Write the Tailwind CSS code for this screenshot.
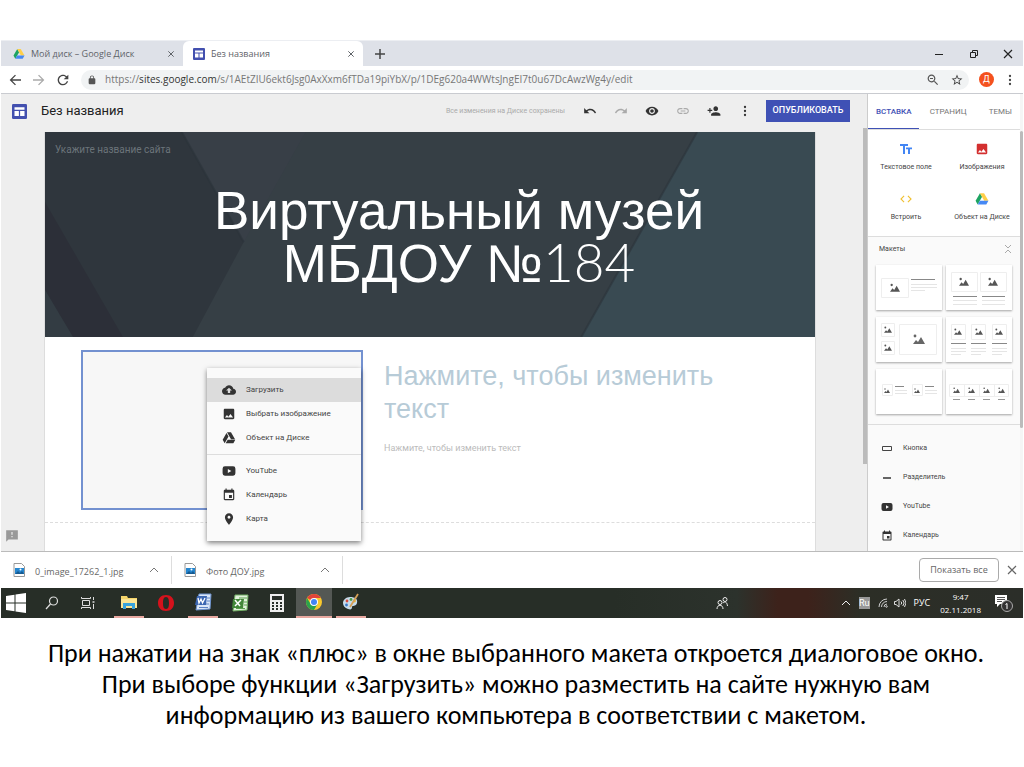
<!DOCTYPE html>
<html lang="ru">
<head>
<meta charset="utf-8">
<meta name="viewport" content="width=device-width, initial-scale=1">
<title>Без названия</title>
<script src="https://cdn.jsdelivr.net/npm/@tailwindcss/browser@4"></script>
</head>
<body class="bg-white fill-[#333] font-['Roboto','Liberation_Sans',sans-serif] text-[#444]">
<svg class="hidden" aria-hidden="true">
  <symbol id="image" viewBox="0 0 24 24"><path d="M21 19V5c0-1.1-.9-2-2-2H5c-1.1 0-2 .9-2 2v14c0 1.1.9 2 2 2h14c1.1 0 2-.9 2-2zM8.500 13.500l2.500 3.010L14.500 12l4.500 6H5l3.500-4.500z"/></symbol>
  <symbol id="dots" viewBox="0 0 24 24"><circle cx="12" cy="4" r="2.300"/><circle cx="12" cy="12" r="2.300"/><circle cx="12" cy="20" r="2.300"/></symbol>
  <symbol id="event" viewBox="0 0 24 24"><path d="M17 12h-5v5h5v-5zM16 1v2H8V1H6v2H5c-1.110 0-1.990.9-1.990 2L3 19c0 1.100.89 2 2 2h14c1.100 0 2-.9 2-2V5c0-1.100-.9-2-2-2h-1V1h-2zm3 18H5V8h14v11z"/></symbol>
  <symbol id="youtube" viewBox="0 0 24 24"><path fill-rule="evenodd" d="M5 4h14a4 4 0 0 1 4 4v8a4 4 0 0 1-4 4H5a4 4 0 0 1-4-4V8a4 4 0 0 1 4-4zm5 4.500v7l6-3.500z"/></symbol>
  <symbol id="cross" viewBox="0 0 24 24"><path d="M4 4l16 16M20 4L4 20" fill="none" stroke="currentColor" stroke-width="3"/></symbol>
  <symbol id="drive" viewBox="0 0 24 24"><path fill="#1da462" d="M8.500 2L1 15l3.600 6.500L12.200 8.300z"/><path fill="#ffcf48" d="M8.500 2h7l7.500 13h-7.200z"/><path fill="#4688f4" d="M8.400 15H23l-3.600 6.500H4.600z"/></symbol>
  <symbol id="sites" viewBox="0 0 24 24"><path fill="#4350af" d="M2 0h20a2 2 0 0 1 2 2v20a2 2 0 0 1-2 2H2a2 2 0 0 1-2-2V2a2 2 0 0 1 2-2z"/><path fill="#fff" d="M4 5h16v4H4zM4 11h7v8H4zM13 11h7v8h-7z"/></symbol>
  <symbol id="peak" viewBox="0 0 12 10"><path d="M0 10l3-4 2 2 3-5 4 7z"/><circle cx="2" cy="2" r="1.400"/></symbol>
  <symbol id="jpg" viewBox="0 0 12 14"><path d="M1 .5h7.500l3 3v10H1z" fill="#fff" stroke="#999"/><path d="M2 5h9v6H2z" fill="#2586cf"/><path d="M2 11l3-3 2 2 2-2 2 3z" fill="#165a91"/><circle cx="7.500" cy="6.500" r="1" fill="#fff"/></symbol>
</svg>

<main class="mx-px mt-10 border-t border-[#eceef2]">
  <!-- Browser tabs -->
  <div class="flex h-[25px] items-stretch bg-[#dee1e8] text-[10px] text-[#5f6368]">
    <div class="flex w-[182px] items-center gap-1.5 pl-3 pr-1">
      <svg class="size-3 shrink-0"><use href="#drive"/></svg>
      <span class="flex-1 font-['Open_Sans',sans-serif] text-[9px]">Мой диск – Google Диск</span>
      <button aria-label="Закрыть вкладку" class="p-1"><svg class="size-2"><use href="#cross"/></svg></button>
    </div>
    <div class="flex w-[180px] items-center gap-1.5 rounded-t-md bg-white pl-2.5 pr-1">
      <svg class="size-3 shrink-0"><use href="#sites"/></svg>
      <span class="flex-1 font-['Open_Sans',sans-serif] text-[9px]">Без названия</span>
      <button aria-label="Закрыть вкладку" class="p-1"><svg class="size-2"><use href="#cross"/></svg></button>
    </div>
    <button aria-label="Новая вкладка" class="ml-3"><svg class="size-2.5" viewBox="0 0 10 10"><path d="M5 0v10M0 5h10" stroke="#444" stroke-width="1.500"/></svg></button>
    <div class="ml-auto mr-2.5 flex items-center gap-6 text-[#222]">
      <button aria-label="Свернуть" class="mr-px"><svg class="size-2.5" viewBox="0 0 10 10"><path d="M1 5.500h8" stroke="#222"/></svg></button>
      <button aria-label="Окно"><svg class="size-2.5" viewBox="0 0 10 10"><path d="M1.500 3.500h5v5h-5zM3.500 3V1.500h5v5H7" fill="none" stroke="#222"/></svg></button>
      <button aria-label="Закрыть"><svg class="size-2.5" viewBox="0 0 10 10"><path d="M1 1l8 8M9 1L1 9" stroke="#222" stroke-width="1.200"/></svg></button>
    </div>
  </div>
  <!-- Address bar -->
  <div class="flex h-[28px] items-center border-b border-[#c9cbd0] bg-white pl-1.5 text-[#555]">
    <button aria-label="Назад" class="mr-2"><svg class="size-4" viewBox="0 0 24 24"><path fill="#444" d="M21 11H7.800l5.600-5.600L12 4l-8 8 8 8 1.400-1.400L7.800 13H21z"/></svg></button>
    <button aria-label="Вперёд" class="mr-2"><svg class="size-4" viewBox="0 0 24 24"><path fill="#aaa" d="M3 11h13.200l-5.600-5.600L12 4l8 8-8 8-1.400-1.400 5.600-5.600H3z"/></svg></button>
    <button aria-label="Обновить" class="mr-2.5"><svg class="size-4" viewBox="0 0 24 24"><path fill="#444" d="M17.650 6.350C16.200 4.900 14.210 4 12 4c-4.420 0-7.990 3.580-7.990 8s3.570 8 7.990 8c3.730 0 6.840-2.550 7.730-6h-2.080c-.82 2.330-3.040 4-5.650 4-3.310 0-6-2.690-6-6s2.690-6 6-6c1.660 0 3.140.69 4.220 1.780L13 11h7V4l-2.350 2.350z"/></svg></button>
    <div class="flex h-5 flex-1 items-center rounded-full bg-[#f1f3f4] pl-1.5 pr-1.5">
      <svg class="mr-2 size-2.5 shrink-0" viewBox="0 0 24 24"><path fill="#555" d="M18 8h-1V6c0-2.760-2.240-5-5-5S7 3.240 7 6v2H6c-1.100 0-2 .9-2 2v10c0 1.100.9 2 2 2h12c1.100 0 2-.9 2-2V10c0-1.100-.9-2-2-2zm-2.900 0H8.900V6c0-1.710 1.390-3.100 3.100-3.100s3.100 1.390 3.100 3.100v2z"/></svg>
      <a href="#" class="flex-1 whitespace-nowrap font-['Open_Sans',sans-serif] text-[10px] text-[#777]">https://<span class="text-[#333]">sites.google.com</span>/s/1AEtZIU6ekt6Jsg0AxXxm6fTDa19piYbX/p/1DEg620a4WWtsJngEI7t0u67DcAwzWg4y/edit</a>
      <button aria-label="Масштаб" class="mr-3"><svg class="size-3" viewBox="2 2 20 20"><path fill="#555" d="M15.500 14h-.79l-.28-.27C15.410 12.590 16 11.110 16 9.500 16 5.910 13.090 3 9.500 3S3 5.910 3 9.500 5.910 16 9.500 16c1.610 0 3.090-.59 4.230-1.570l.27.28v.79l5 4.990L20.490 19l-4.990-5zm-6 0C7.010 14 5 11.990 5 9.500S7.010 5 9.500 5 14 7.010 14 9.500 11.990 14 9.500 14zM7 8.500h5v2H7z"/></svg></button>
      <button aria-label="Закладка"><svg class="size-3" viewBox="1 1 22 22"><path fill="#444" d="M22 9.240l-7.190-.62L12 2 9.190 8.630 2 9.240l5.460 4.730L5.820 21 12 17.270 18.180 21l-1.630-7.030L22 9.240zM12 15.400l-3.760 2.270 1-4.280-3.320-2.880 4.380-.38L12 6.100l1.710 4.040 4.380.38-3.320 2.880 1 4.280L12 15.400z"/></svg></button>
    </div>
    <button class="ml-2.5 mr-2.5 flex size-[15px] items-center justify-center rounded-full bg-[#f4511e] text-[9px] text-white">Д</button>
    <button aria-label="Меню" class="mr-[7px]"><svg class="size-3" fill="#444"><use href="#dots"/></svg></button>
  </div>

  <!-- Sites editor -->
  <div class="flex h-[457px] items-stretch bg-[#eee]">
    <div class="flex min-w-0 flex-1 flex-col">
      <header class="flex h-[38px] shrink-0 items-center pb-1 pl-[11px] pr-[17px]">
        <svg class="size-[15px] shrink-0"><use href="#sites"/></svg>
        <h1 class="ml-3.5 flex-1 text-[13px] text-[#222]">Без названия</h1>
        <span class="mr-[18px] text-[7px] text-[#aaa]">Все изменения на Диске сохранены</span>
        <div class="mr-3.5 flex items-center gap-[17px]">
          <button aria-label="Отменить"><svg class="size-3.5" viewBox="0 0 24 24"><path d="M12.500 8c-2.650 0-5.050.99-6.900 2.600L2 7v9h9l-3.620-3.620c1.390-1.160 3.160-1.880 5.120-1.880 3.540 0 6.550 2.310 7.600 5.500l2.370-.78C21.080 11.030 17.150 8 12.500 8z"/></svg></button>
          <button aria-label="Повторить"><svg class="size-3.5" viewBox="0 0 24 24"><path fill="#aaa" d="M18.400 10.600C16.550 8.990 14.150 8 11.500 8c-4.650 0-8.580 3.030-9.960 7.220L3.900 16c1.050-3.190 4.050-5.500 7.600-5.500 1.950 0 3.730.72 5.120 1.880L13 16h9V7l-3.600 3.600z"/></svg></button>
          <button aria-label="Просмотр"><svg class="size-3.5" viewBox="0 0 24 24"><path d="M12 4.500C7 4.500 2.730 7.610 1 12c1.730 4.390 6 7.500 11 7.500s9.270-3.110 11-7.500c-1.730-4.390-6-7.500-11-7.500zM12 17c-2.760 0-5-2.240-5-5s2.240-5 5-5 5 2.240 5 5-2.240 5-5 5zm0-8c-1.660 0-3 1.340-3 3s1.340 3 3 3 3-1.340 3-3-1.340-3-3-3z"/></svg></button>
          <button aria-label="Ссылка"><svg class="size-3.5" viewBox="0 0 24 24"><path fill="#aaa" d="M3.900 12c0-1.710 1.390-3.100 3.100-3.100h4V7H7c-2.760 0-5 2.240-5 5s2.240 5 5 5h4v-1.900H7c-1.710 0-3.100-1.390-3.100-3.100zM8 13h8v-2H8v2zm9-6h-4v1.900h4c1.710 0 3.100 1.390 3.100 3.100s-1.390 3.100-3.100 3.100h-4V17h4c2.760 0 5-2.240 5-5s-2.240-5-5-5z"/></svg></button>
          <button aria-label="Добавить пользователей"><svg class="size-3.5" viewBox="0 0 24 24"><path d="M15 12c2.210 0 4-1.790 4-4s-1.790-4-4-4-4 1.790-4 4 1.790 4 4 4zm-9-2V7H4v3H1v2h3v3h2v-3h3v-2H6zm9 4c-2.670 0-8 1.340-8 4v2h16v-2c0-2.660-5.330-4-8-4z"/></svg></button>
          <button aria-label="Ещё"><svg class="h-3 w-3.5"><use href="#dots"/></svg></button>
        </div>
        <button class="h-[22px] w-[84px] bg-[#3f51b5] text-[9px] font-medium text-white">ОПУБЛИКОВАТЬ</button>
      </header>
      <div class="flex min-h-0 flex-1">
        <div class="flex w-[43px] items-end pb-2 pl-1">
          <button aria-label="Отзыв"><svg class="size-3.5" viewBox="0 0 24 24"><path fill="#999" d="M20 2H2v20l4-4h16V2zm-7 12h-2v-2h2v2zm0-4h-2V5h2v5z"/></svg></button>
        </div>
        <!-- Page canvas -->
        <div class="flex min-w-0 flex-1 flex-col border-x border-[#ddd] bg-white">
          <section class="relative h-[205px] shrink-0 overflow-hidden bg-[#363e44] text-white">
            <svg class="absolute inset-0 size-full" viewBox="0 0 771 205" preserveAspectRatio="none">
              <path d="M0 0h771v205H0z" fill="#363f45"/>
              <path d="M137 0h124l-62 110z" fill="#383f47"/>
              <path d="M0 0h137l62 110-51 95H0z" fill="#2f363d"/>
              <path d="M0 70l78 135H28L0 158z" fill="#2c2f38"/>
              <path d="M0 158l28 47H0z" fill="#333c43"/>
              <path d="M653 0h118v205H537z" fill="#394a52"/>
              <path d="M653 0L537 205M137 0l62 110" stroke="#2b343a" stroke-width="2" fill="none" opacity=".6"/>
            </svg>
            <p class="relative pl-2.5 pt-[11px] text-[10px] leading-[14px] text-[#6b747a]">Укажите название сайта</p>
            <h2 class="relative mt-7 pl-[58px] text-center font-['Liberation_Sans',sans-serif] text-[53px] leading-[51px]">Виртуальный музей<br>МБДОУ №<span class="font-['Lato',sans-serif] font-light">184</span></h2>
          </section>
          <section class="flex h-[186px] shrink-0 items-start border-b border-dashed border-[#ddd] pl-9 pt-[13px]">
            <div class="relative h-[160px] w-[282px] shrink-0 border-2 border-[#7391d0] bg-[#f7f7f7]">
              <div role="menu" class="absolute left-[124px] top-4 w-[154px] bg-[#fafafa] pb-2.5 pt-2.5 text-[8px] text-[#444] shadow-[0_2px_5px_rgba(0,0,0,0.5)]">
                <button role="menuitem" class="flex h-[24px] w-full items-center gap-2.5 bg-[#dcdcdc] pl-[15px]"><svg class="size-3.5" viewBox="0 0 24 24"><path d="M19.350 10.040C18.670 6.590 15.640 4 12 4 9.110 4 6.600 5.640 5.350 8.040 2.340 8.360 0 10.910 0 14c0 3.310 2.690 6 6 6h13c2.760 0 5-2.240 5-5 0-2.640-2.050-4.780-4.650-4.960zM14 13v4h-4v-4H7l5-5 5 5h-3z"/></svg>Загрузить</button>
                <button role="menuitem" class="flex h-[24px] w-full items-center gap-2.5 pl-[15px]"><svg class="size-3.5"><use href="#image"/></svg>Выбрать изображение</button>
                <button role="menuitem" class="flex h-[24px] w-full items-center gap-2.5 pl-[15px]"><svg class="size-3.5" viewBox="0 0 24 24"><path d="M7.710 3.500L1.150 15l3.430 6 6.550-11.500L7.710 3.500zM9.730 15L6.300 21h13.120l3.430-6H9.730zM22.280 14L15.420 2H8.580l6.860 12h6.840z"/></svg>Объект на Диске</button>
                <hr class="my-1 border-[#ddd]">
                <button role="menuitem" class="flex h-[24px] w-full items-center gap-2.5 pl-[15px]"><svg class="size-3.5"><use href="#youtube"/></svg>YouTube</button>
                <button role="menuitem" class="flex h-[24px] w-full items-center gap-2.5 pl-[15px]"><svg class="size-3.5"><use href="#event"/></svg>Календарь</button>
                <button role="menuitem" class="flex h-[24px] w-full items-center gap-2.5 pl-[15px]"><svg class="size-3.5" viewBox="0 0 24 24"><path d="M12 2C8.130 2 5 5.130 5 9c0 5.250 7 13 7 13s7-7.750 7-13c0-3.870-3.130-7-7-7zm0 9.500c-1.380 0-2.500-1.120-2.500-2.500s1.120-2.500 2.500-2.500 2.500 1.120 2.500 2.500-1.120 2.500-2.500 2.500z"/></svg>Карта</button>
              </div>
            </div>
            <div class="ml-5 w-[360px] pt-2.5 pl-px">
              <h3 class="font-['Liberation_Sans',sans-serif] text-[27px] leading-[33px] text-[#b7cbd7]">Нажмите, чтобы изменить текст</h3>
              <p class="mt-3.5 text-[9px] leading-4 text-[#bbb]">Нажмите, чтобы изменить текст</p>
            </div>
          </section>
        </div>
        <div class="w-[47px]"></div>
        <div class="w-1 pb-[83px]"><div class="h-full -mt-1 bg-[#bbb]"></div></div>
      </div>
    </div>

    <!-- Insert panel -->
    <aside class="flex w-[153px] shrink-0 flex-col border-l border-[#ccc] bg-[#fafafa] text-[7px]">
      <nav class="flex h-[36px] shrink-0 items-stretch justify-between border-b border-[#ddd] bg-white pr-2 text-[8px] text-[#777]">
        <a href="#" class="flex items-center border-b border-[#3f51b5] px-2 pt-0.5 font-medium text-[#3f51b5]">ВСТАВКА</a>
        <a href="#" class="flex items-center pt-px">СТРАНИЦ</a>
        <a href="#" class="flex items-center pl-3 pt-px">ТЕМЫ</a>
      </nav>
      <div class="grid h-[107px] shrink-0 grid-cols-2 items-start border-b border-[#ddd] bg-white pt-3">
        <button class="flex h-[50px] flex-col items-center gap-1.5"><svg class="size-3.5" viewBox="0 0 14 14"><path d="M1 2h8v2H6v8H4V4H1zM7 5.500h6v1.800h-2V12H9V7.300H7z" fill="#4285f4"/></svg>Текстовое поле</button>
        <button class="flex h-[50px] flex-col items-center gap-1.5"><svg class="size-3.5 fill-[#d32f2f]"><use href="#image"/></svg>Изображения</button>
        <button class="flex h-[50px] flex-col items-center gap-1.5"><svg class="size-3.5 fill-[#f0c030]" viewBox="0 0 24 24"><path d="M9.400 16.600L4.800 12l4.600-4.600L8 6l-6 6 6 6 1.400-1.400zm5.200 0l4.600-4.600-4.600-4.600L16 6l6 6-6 6-1.400-1.400z"/></svg>Встроить</button>
        <button class="flex h-[50px] flex-col items-center gap-1.5"><svg class="size-3.5"><use href="#drive"/></svg>Объект на Диске</button>
      </div>
      <div class="flex h-[28px] shrink-0 items-center justify-between pb-1 pl-[11px] pr-2 text-[7px]">Макеты
        <button aria-label="Свернуть макеты"><svg class="h-2.5 w-2" viewBox="0 0 8 10"><path d="M1 1l3 3 3-3M1 9l3-3 3 3" fill="none" stroke="#aaa"/></svg></button>
      </div>
      <div class="grid shrink-0 grid-cols-2 gap-x-1 gap-y-[7px] border-b border-[#ddd] pb-2.5 pl-2 pr-2">
        <button aria-label="Макет 1" class="bg-white shadow-[0_1px_2px_rgba(0,0,0,0.35)]"><svg class="h-[45px] w-full" viewBox="0 0 66 45"><path d="M5.500 13.500h27v19h-27z" fill="none" stroke="#eee"/><use href="#peak" x="14" y="18" width="10" height="9" fill="#555"/><path d="M35 14.500h24" stroke="#888"/><path d="M35 19.500h26M35 22.500h26M35 25.500h14" stroke="#e5e5e5"/></svg></button>
        <button aria-label="Макет 2" class="bg-white shadow-[0_1px_2px_rgba(0,0,0,0.35)]"><svg class="h-[45px] w-full" viewBox="0 0 66 45"><path d="M5.500 7.500h26v19h-26zM34.500 7.500h26v19h-26z" fill="none" stroke="#eee"/><use href="#peak" x="13" y="12" width="10" height="9" fill="#555"/><use href="#peak" x="42" y="12" width="10" height="9" fill="#555"/><path d="M7 31.500h24M36 31.500h23" stroke="#888"/><path d="M7 35.500h24M7 39.500h24M36 35.500h23M36 39.500h23" stroke="#e5e5e5"/></svg></button>
        <button aria-label="Макет 3" class="bg-white shadow-[0_1px_2px_rgba(0,0,0,0.35)]"><svg class="h-[45px] w-full" viewBox="0 0 66 45"><path d="M5.500 6.500h13v13h-13zM5.500 24.500h13v13h-13zM23.500 7.500h37v30h-37z" fill="none" stroke="#eee"/><use href="#peak" x="8" y="9" width="8" height="7" fill="#555"/><use href="#peak" x="8" y="27" width="8" height="7" fill="#555"/><use href="#peak" x="37" y="17" width="12" height="10" fill="#666"/></svg></button>
        <button aria-label="Макет 4" class="bg-white shadow-[0_1px_2px_rgba(0,0,0,0.35)]"><svg class="h-[45px] w-full" viewBox="0 0 66 45"><path d="M5.500 7.500h14v15h-14zM25.500 7.500h14v15h-14zM46.500 7.500h14v15h-14z" fill="none" stroke="#eee"/><use href="#peak" x="8" y="11" width="8" height="7" fill="#555"/><use href="#peak" x="29" y="11" width="8" height="7" fill="#555"/><use href="#peak" x="49" y="11" width="8" height="7" fill="#555"/><path d="M5 26.500h15M25 26.500h15M46 26.500h15" stroke="#888"/><path d="M5 31.500h15M5 34.500h15M25 31.500h15M25 34.500h15M46 31.500h15M46 34.500h15M5 37.500h10M25 37.500h10M46 37.500h10" stroke="#e5e5e5"/></svg></button>
        <button aria-label="Макет 5" class="bg-white shadow-[0_1px_2px_rgba(0,0,0,0.35)]"><svg class="h-[45px] w-full" viewBox="0 0 66 45"><path d="M6.500 15.500h10v11h-10zM36.500 15.500h10v11h-10z" fill="none" stroke="#eee"/><use href="#peak" x="8" y="19" width="6" height="5" fill="#555"/><use href="#peak" x="38" y="19" width="6" height="5" fill="#555"/><path d="M19 17.500h9M49 17.500h9" stroke="#888"/><path d="M19 21.500h12M19 24.500h12M49 21.500h12M49 24.500h12" stroke="#e5e5e5"/></svg></button>
        <button aria-label="Макет 6" class="bg-white shadow-[0_1px_2px_rgba(0,0,0,0.35)]"><svg class="h-[45px] w-full" viewBox="0 0 66 45"><path d="M3.500 15.500h59v12h-59zM18.500 15.500v12M33.500 15.500v12M48.500 15.500v12" fill="none" stroke="#eee"/><use href="#peak" x="7" y="18" width="7" height="6" fill="#555"/><use href="#peak" x="22" y="18" width="7" height="6" fill="#555"/><use href="#peak" x="37" y="18" width="7" height="6" fill="#555"/><use href="#peak" x="52" y="18" width="7" height="6" fill="#555"/><path d="M7 30.500h7M22 30.500h7M37 30.500h7M52 30.500h7" stroke="#999"/></svg></button>
      </div>
      <div class="flex flex-col overflow-hidden pt-[9px]">
        <button class="flex h-[29px] shrink-0 items-center gap-2.5 pl-[13px]"><svg class="size-3" viewBox="0 0 12 12"><path d="M1.500 3.500h9v4h-9z" fill="none" stroke="#444"/></svg>Кнопка</button>
        <button class="flex h-[29px] shrink-0 items-center gap-2.5 pl-[13px]"><svg class="size-3" viewBox="0 0 12 12"><path d="M2 6h8" stroke="#333" stroke-width="1.500"/></svg>Разделитель</button>
        <button class="flex h-[29px] shrink-0 items-center gap-2.5 pl-[13px]"><svg class="size-3"><use href="#youtube"/></svg>YouTube</button>
        <button class="flex h-[29px] shrink-0 items-center gap-2.5 pl-[13px]"><svg class="size-3"><use href="#event"/></svg>Календарь</button>
      </div>
    </aside>
    <div class="w-[3px] shrink-0 bg-[#f5f5f5] pt-[37px]"><div class="h-[297px] rounded bg-[#bbb]"></div></div>
  </div>

  <!-- Downloads -->
  <div class="flex h-[37px] items-center border-t border-[#bbb] bg-white text-[#666]">
    <div class="flex h-7 w-[171px] items-center border-r border-[#ddd] pl-3"><svg class="mr-2.5 h-3.5 w-3"><use href="#jpg"/></svg><span class="flex-1 pt-1 font-['Open_Sans',sans-serif] text-[9px]">0_image_17262_1.jpg</span><button aria-label="Меню файла" class="mr-3"><svg class="h-1.5 w-2.5" viewBox="0 0 10 6"><path d="M1 5l4-4 4 4" fill="none" stroke="#777"/></svg></button></div>
    <div class="flex h-7 w-[171px] items-center border-r border-[#ddd] pl-3"><svg class="mr-2.5 h-3.5 w-3"><use href="#jpg"/></svg><span class="flex-1 pt-1 font-['Open_Sans',sans-serif] text-[9px]">Фото ДОУ.jpg</span><button aria-label="Меню файла" class="mr-3"><svg class="h-1.5 w-2.5" viewBox="0 0 10 6"><path d="M1 5l4-4 4 4" fill="none" stroke="#777"/></svg></button></div>
    <button class="ml-auto h-6 w-20 rounded border border-[#aaa] font-['Open_Sans',sans-serif] text-[9px] font-medium">Показать все</button>
    <button aria-label="Закрыть загрузки" class="ml-2 mr-1.5"><svg class="size-2.5" viewBox="0 0 10 10"><path d="M1 1l8 8M9 1L1 9" stroke="#666" stroke-width="1.200"/></svg></button>
  </div>

  <!-- Taskbar -->
  <div class="flex h-[30px] items-stretch bg-[linear-gradient(90deg,#272e27_0%,#272e27_60%,#2c322c_72%,#3d221b_76%,#3d221b_79%,#2c2e26_84%,#2b2e29_100%)] text-[9px] text-white">
    <button aria-label="Пуск" class="flex w-[30px] items-center justify-center"><svg class="size-5" viewBox="0 0 20 20" fill="#fff"><path fill="#fff" d="M0 3l8.500-1.200v7.700H0zM9.500 1.600L20 0v9.500H9.500zM0 10.500h8.500v7.700L0 17zM9.500 10.500H20V20L9.500 18.400z"/></svg></button>
    <button aria-label="Поиск" class="flex w-[41px] items-center justify-center"><svg class="size-3.5" viewBox="0 0 14 14"><g fill="none" stroke="#ddd" stroke-width="1.200"><circle cx="8.500" cy="5" r="4"/><path d="M5.500 8L1 13"/></g></svg></button>
    <button aria-label="Представление задач" class="flex w-8 items-center justify-center"><svg class="size-3.5" viewBox="0 0 14 14"><g fill="none" stroke="#ddd"><path d="M1.500 4.500h7v5h-7zM.5 1v1.500h9V1M.5 13v-1.500h9V13M12.500 1v3M12.500 8v5"/><path d="M11.500 6h2" stroke-width="1.500"/></g></svg></button>
    <button aria-label="Проводник" class="ml-2.5 flex w-[30px] items-center justify-center border-b-2 border-[#e8a8a0]"><svg class="size-[18px]" viewBox="0 0 18 18"><path d="M1 3h6l1 2h9v10H1z" fill="#f5d56a"/><path d="M1 6h16v9H1z" fill="#fbe596"/><path d="M3 10h12v6h-3v-3H6v3H3z" fill="#38a3dd"/></svg></button>
    <button aria-label="Opera" class="flex w-[44px] items-center justify-center"><svg class="size-[18px]" viewBox="0 0 18 18"><path fill="#d5121c" fill-rule="evenodd" d="M9 1c5 0 8 3.500 8 8s-3 8-8 8-8-3.500-8-8 3-8 8-8zm0 2C6.500 3 6 6 6 9s.5 6 3 6 3-3 3-6-.5-6-3-6z"/></svg></button>
    <button aria-label="Word" class="flex w-[30px] items-center justify-center border-b-2 border-[#e8a8a0]"><svg class="size-[18px]" viewBox="0 0 18 18"><path d="M5 1h12l-1 15-14 1z" fill="#dbe7f8" stroke="#6d93cf"/><path d="M13 5h3M13 8h3M12 11h3M5 14.500h9" stroke="#5d84c4"/><path d="M3 3h10l-1 9H1z" fill="#3c67b1"/><path d="M4 5l1 5 2-4 1.500 4L11 5" fill="none" stroke="#fff" stroke-width="1.300"/></svg></button>
    <button aria-label="Excel" class="flex w-[44px] items-center justify-center"><svg class="size-[18px]" viewBox="0 0 18 18"><path d="M4 1h13l-1 15-14 1z" fill="#e2f2dc" stroke="#6fae62"/><path d="M8 4h8M13 8h3M13 11h3M5 14.500h9" stroke="#5ba04e"/><path d="M2 5h11l-1 9H1z" fill="#43873a"/><path d="M4 6l5 6M10 6l-6 6" stroke="#fff" stroke-width="1.500"/></svg></button>
    <button aria-label="Калькулятор" class="flex w-[30px] items-center justify-center"><svg class="h-[18px] w-3.5" viewBox="2 0 14 18"><path d="M2 0h14v18H2z" fill="#eee"/><path d="M4 2h10v4H4z" fill="#292f2a"/><path d="M4 9h10M4 12h10M4 15h10" stroke="#292f2a" stroke-width="2" stroke-dasharray="2 2"/></svg></button>
    <button aria-label="Chrome" class="ml-1 flex w-9 items-center justify-center border-b-2 border-[#e8a8a0] bg-[#545854]"><svg class="size-[18px]" viewBox="0 0 18 18"><circle cx="9" cy="9" r="8" fill="#f9c82d"/><path d="M9 9L2.100 5A8 8 0 0 1 15.900 5H9z" fill="#e2443a"/><path d="M2.100 5A8 8 0 0 0 9 17l3.500-6H5.600z" fill="#2ba24c"/><circle cx="9" cy="9" r="4" fill="#fff"/><circle cx="9" cy="9" r="3" fill="#4285f4"/></svg></button>
    <button aria-label="Paint" class="ml-1 flex w-[30px] items-center justify-center border-b-2 border-[#e8a8a0]"><svg class="size-[18px]" viewBox="0 0 18 18"><path d="M8 4c5 0 8 2 7 6s-5 2-5 4-1 3-4 2-5-3-5-6 3-6 7-6z" fill="#c7dcec"/><circle cx="5" cy="8" r="1.400" fill="#d54d3d"/><circle cx="9" cy="6.500" r="1.400" fill="#4b9c4a"/><circle cx="4.500" cy="12" r="1.400" fill="#3878c8"/><circle cx="12.500" cy="8" r="1.400" fill="#edb62e"/><path d="M16 1L8 14" stroke="#d6a057" stroke-width="1.800"/></svg></button>
    <div class="ml-auto flex items-center">
      <button aria-label="Люди" class="mr-[113px]"><svg class="size-3" viewBox="0 0 12 12"><g fill="none" stroke="#eee"><circle cx="4" cy="5.500" r="2"/><path d="M1 12c0-5 6-5 6 0"/><circle cx="9" cy="2.500" r="2"/><path d="M7 6c2-2 4-1 4.500 3"/></g></svg></button>
      <button aria-label="Скрытые значки" class="mr-2"><svg class="h-1.5 w-2.5" viewBox="0 0 10 6"><path d="M1 5l4-4 4 4" fill="none" stroke="#eee"/></svg></button>
      <span class="mr-2 bg-[#999] leading-3">Ru</span>
      <svg class="mr-1.5 size-2.5" viewBox="0 0 10 10"><g fill="none" stroke="#ccc"><path d="M1 9a8 8 0 0 1 8-8M3.500 9A5.500 5.500 0 0 1 9 3.500M6 9a3 3 0 0 1 3-3"/><circle cx="8.500" cy="8.500" r=".8"/></g></svg>
      <svg class="mr-2 h-2.5 w-3" viewBox="0 0 12 10"><path fill="none" stroke="#ddd" d="M.5 3.500H2L5 1v8L2 6.500H.5zM7 3.500q1.500 1.500 0 3M8.800 2q2.700 3 0 6M10.500 1q3 4 0 8"/></svg>
      <span class="mr-2.5 font-['Open_Sans',sans-serif]">РУС</span>
      <span class="mr-3.5 text-center font-['Open_Sans',sans-serif] text-[8px] leading-[13px]">9:47<br>02.11.2018</span>
      <button aria-label="Уведомления" class="mr-2.5"><svg class="size-[18px]" viewBox="0 0 18 18"><path d="M0 1h12v9H5l-3 3v-3H0z" fill="#fff"/><path d="M2 3.500h8M2 5.500h8M2 7.500h5" stroke="#555"/><circle cx="12" cy="12" r="5.500" fill="#333" stroke="#aaa"/><path d="M10.500 10.500L12 9.500V15" stroke="#fff" fill="none"/></svg></button>
    </div>
  </div>

  <p class="pb-8 pl-2 pt-5 text-center font-['Carlito','Open_Sans',sans-serif] text-[26px] leading-[31px] text-black">При нажатии на знак «плюс» в окне выбранного макета откроется диалоговое окно.<br>При выборе функции «Загрузить» можно разместить на сайте нужную вам<br>информацию из вашего компьютера в соответствии с макетом.</p>
</main>
</body>
</html>
